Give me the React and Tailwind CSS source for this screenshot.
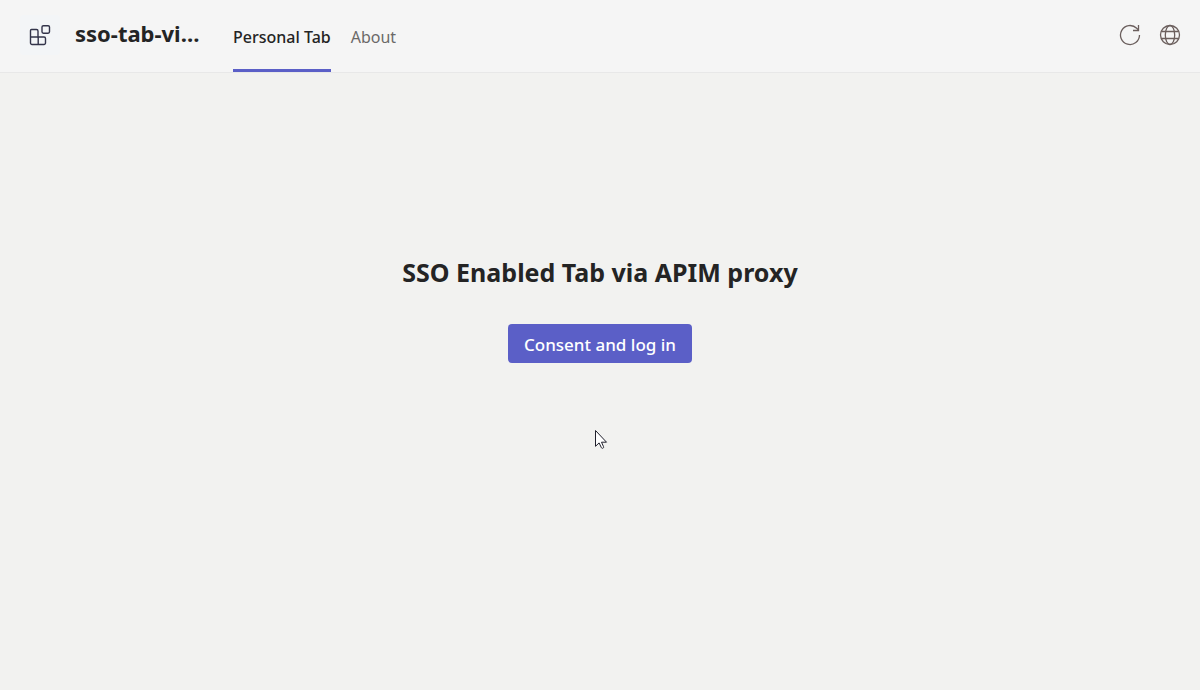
const tabs = [
  { label: 'Personal Tab', active: true },
  { label: 'About', active: false },
];

function AppIcon() {
  return (
    <svg width="40" height="40" viewBox="0 0 40 40" fill="none" aria-hidden="true">
      <rect width="40" height="40" rx="4" fill="#f3f5f7" />
      <g stroke="#33344a" strokeWidth="1.4" strokeLinejoin="round">
        <path d="M11.5 14.5h5a1.5 1.5 0 0 1 1.5 1.5v6h6a1.5 1.5 0 0 1 1.5 1.5v4.5a1.5 1.5 0 0 1-1.5 1.5H12a1.5 1.5 0 0 1-1.5-1.5V15.5a1 1 0 0 1 1-1Z" />
        <path d="M18.2 22v7.5M10.5 22h7.7" />
        <rect x="22" y="10.7" width="7.5" height="7.5" rx="1.4" />
      </g>
    </svg>
  );
}

function RefreshIcon() {
  return (
    <svg width="22" height="22" viewBox="0 0 22 22" fill="none" stroke="#6b5f5d" strokeWidth="1.3" aria-hidden="true">
      <path d="M20.5 11A9.5 9.5 0 1 1 17.7 4.3L19.5 6" />
      <path d="M19.5 1v5.5h-5.5" />
    </svg>
  );
}

function GlobeIcon() {
  return (
    <svg width="22" height="22" viewBox="0 0 22 22" fill="none" stroke="#6b5f5d" strokeWidth="1.3" aria-hidden="true">
      <circle cx="11" cy="11" r="9.5" />
      <ellipse cx="11" cy="11" rx="4.7" ry="9.5" />
      <path d="M2.2 7.5h17.6M2.2 14.5h17.6" />
    </svg>
  );
}

function Pointer() {
  return (
    <svg
      className="pointer-events-none absolute left-1/2 top-[429px] -ml-[6px]"
      width="14"
      height="20"
      viewBox="0 0 14 20"
      aria-hidden="true"
    >
      <path
        d="M1.5 1.5v15.8l3.6-3.4 2.2 4.6c.3.7.9 1 1.6.7.7-.3.9-.9.6-1.6l-2-4.4h5Z"
        fill="#fff"
        stroke="#20202c"
        strokeWidth="1"
        strokeLinejoin="round"
      />
    </svg>
  );
}

export default function App() {
  return (
    <div className="relative flex min-h-screen flex-col bg-[#f2f2f0] font-['Noto_Sans','Open_Sans',sans-serif] text-[#242424]">
      <header className="flex h-[73px] items-stretch border-b border-[#e8e8e8] bg-[#f5f5f5] pl-5 pr-[19px]">
        <div className="flex items-center pb-0.5">
          <AppIcon />
          <h1 className="ml-[15px] w-[138px] truncate pb-1 text-[22px] font-bold leading-8">sso-tab-vi…</h1>
        </div>
        <nav className="ml-5 flex gap-5 text-base leading-6">
          {tabs.map((tab) => (
            <a
              key={tab.label}
              href="#"
              aria-current={tab.active ? 'page' : undefined}
              className={
                tab.active
                  ? 'flex items-center whitespace-nowrap border-b-[3px] border-[#5b5fc7] pt-1 font-medium'
                  : 'flex items-center whitespace-nowrap border-b-[3px] border-transparent pt-1 text-[#6b6968]'
              }
            >
              {tab.label}
            </a>
          ))}
        </nav>
        <div className="ml-auto flex items-center gap-[18px] pb-0.5">
          <button type="button" aria-label="Refresh">
            <RefreshIcon />
          </button>
          <button type="button" aria-label="Open in browser">
            <GlobeIcon />
          </button>
        </div>
      </header>
      <main className="flex flex-1 flex-col items-center pt-[183px]">
        <h2 className="text-[25px] font-bold leading-8">SSO Enabled Tab via APIM proxy</h2>
        <button type="button" className="mt-9 h-[39px] rounded bg-[#5b5fc7] px-4 pt-0.5 text-[17px] font-medium leading-6 text-white">
          Consent and log in
        </button>
      </main>
      <Pointer />
    </div>
  );
}
